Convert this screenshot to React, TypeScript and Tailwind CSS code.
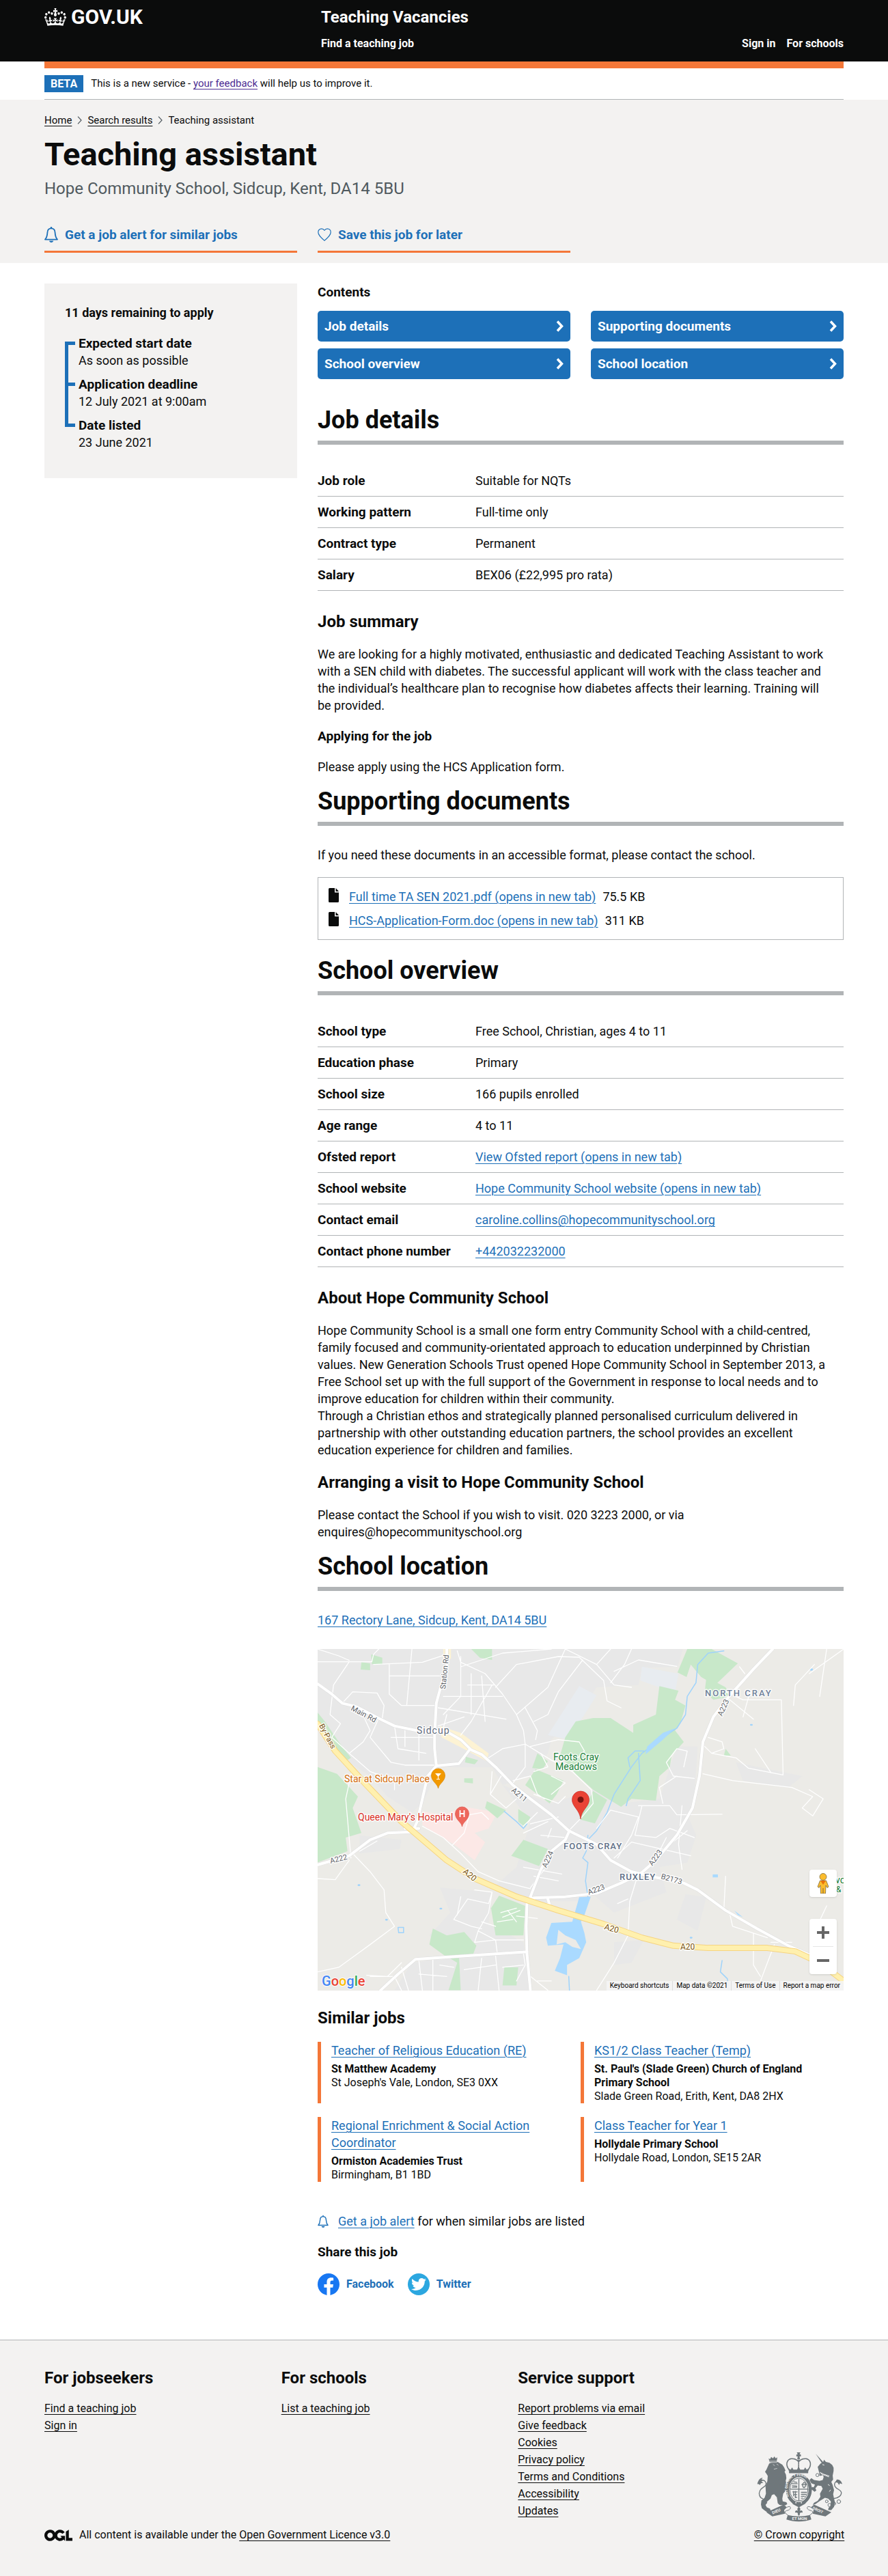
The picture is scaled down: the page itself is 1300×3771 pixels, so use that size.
import React from 'react';
import { FaTwitter } from 'react-icons/fa';

const LINK = 'text-[#1d70b8] underline decoration-1 underline-offset-[3px]';
const FOOT_LINK = 'underline decoration-1 underline-offset-[3px]';
const WRAP = 'mx-auto w-full max-w-[1230px] px-[30px]';

function Crown() {
  return (
    <svg aria-hidden="true" className="h-[26px] w-[32px]" viewBox="0 0 132 97" preserveAspectRatio="none" fill="currentColor">
      <path d="M25 30.2c3.5 1.5 7.7-.2 9.1-3.7 1.5-3.6-.2-7.8-3.9-9.2-3.6-1.4-7.6.3-9.1 3.9-1.4 3.5.3 7.5 3.9 9zM9 39.5c3.6 1.5 7.8-.2 9.2-3.7 1.5-3.6-.2-7.8-3.9-9.1-3.6-1.5-7.6.2-9.1 3.8-1.4 3.5.3 7.5 3.8 9zM4.4 57.2c3.5 1.5 7.7-.2 9.1-3.8 1.5-3.6-.2-7.7-3.9-9.1-3.5-1.5-7.6.3-9.1 3.8-1.4 3.5.3 7.6 3.9 9.1zm38.3-21.4c3.5 1.5 7.7-.2 9.1-3.8 1.5-3.6-.2-7.7-3.9-9.1-3.6-1.5-7.6.3-9.1 3.8-1.3 3.6.4 7.7 3.9 9.1zm64.4-5.6c-3.6 1.5-7.8-.2-9.1-3.7-1.5-3.6.2-7.8 3.8-9.2 3.6-1.4 7.7.3 9.2 3.9 1.3 3.5-.4 7.5-3.9 9zm15.9 9.3c-3.6 1.5-7.7-.2-9.1-3.7-1.5-3.6.2-7.8 3.7-9.1 3.6-1.5 7.7.2 9.2 3.8 1.5 3.5-.3 7.5-3.8 9zm4.7 17.7c-3.6 1.5-7.8-.2-9.2-3.8-1.5-3.6.2-7.7 3.9-9.1 3.6-1.5 7.7.3 9.2 3.8 1.3 3.5-.4 7.6-3.9 9.1zM89.3 35.8c-3.6 1.5-7.8-.2-9.2-3.8-1.4-3.6.2-7.7 3.9-9.1 3.6-1.5 7.7.3 9.2 3.8 1.4 3.6-.3 7.7-3.9 9.1zM69.7 17.7l8.9 4.7V9.3l-8.9 2.8c-.2-.3-.5-.6-.9-.9L72.4 0H59.6l3.5 11.2c-.3.3-.6.5-.9.9l-8.8-2.8v13.1l8.8-4.7c.3.3.6.7.9.9l-5 15.4v.1c-.2.8-.4 1.6-.4 2.4 0 4.1 3.1 7.5 7 8.1h.2c.3 0 .7.1 1 .1.4 0 .7 0 1-.1h.2c4-.6 7.1-4.1 7.1-8.1 0-.8-.1-1.7-.4-2.4V34l-5.1-15.4c.4-.2.7-.6 1-.9zM66 92.8c16.9 0 32.8 1.1 47.1 3.2 4-16.9 8.9-26.7 14-33.5l-9.6-3.4c1 4.9 1.1 7.2 0 10.2-1.5-1.4-3-4.3-4.2-8.7L108.6 76c2.8-2 5-3.2 7.5-3.3-4.4 9.4-10 11.9-13.6 11.2-4.3-.8-6.3-4.6-5.6-7.9 1-4.7 5.7-5.9 8-.5 4.3-8.7-3-11.4-7.6-8.8 7.1-7.2 7.9-13.5 2.1-21.1-8 6.1-8.1 12.3-4.5 20.8-4.7-5.4-12.1-2.5-9.5 6.2 3.4-5.2 7.9-2 7.2 3.1-.6 4.3-6.4 7.8-13.5 7.2-10.3-.9-10.9-8-11.2-13.8 2.5-.5 7.1 1.8 11 7.3L80.2 60c-4.1 4.4-8 5.3-12.3 5.4 1.4-4.4 8-11.6 8-11.6H55.5s6.4 7.2 7.9 11.6c-4.2-.1-8-1-12.3-5.4l1.4 16.4c3.9-5.5 8.5-7.7 10.9-7.3-.3 5.8-.9 12.8-11.1 13.8-7.2.6-12.9-2.9-13.5-7.2-.7-5 3.8-8.3 7.1-3.1 2.7-8.7-4.6-11.6-9.4-6.2 3.7-8.5 3.6-14.7-4.6-20.8-5.8 7.6-5 13.9 2.2 21.1-4.7-2.6-11.9.1-7.7 8.8 2.3-5.5 7.1-4.2 8.1.5.7 3.3-1.3 7.1-5.7 7.9-3.5.7-9-1.8-13.5-11.2 2.5.1 4.7 1.3 7.5 3.3l-4.7-15.4c-1.2 4.4-2.7 7.2-4.3 8.7-1.1-3-.9-5.3 0-10.2l-9.5 3.4c5 6.9 9.9 16.7 14 33.5 14.8-2.1 30.8-3.2 47.7-3.2z" />
    </svg>
  );
}

function Bell({ className }: { className: string }) {
  return (
    <svg aria-hidden="true" className={className} viewBox="0 0 20 23" fill="none">
      <path d="M10 2.4c-3.5 0-5.5 2.5-5.6 6.1C4.2 13 3.3 16 1 18.600h18c-2.300-2.600-3.200-5.600-3.400-10.100-.1-3.600-2.100-6.100-5.600-6.100z" stroke="#1d70b8" strokeWidth="1.800" strokeLinejoin="round" />
      <circle cx="10" cy="1.400" r="1.300" fill="#1d70b8" />
      <path d="M7 20.500h6.200c-.3 1.500-1.500 2.500-3.100 2.500s-2.800-1-3.100-2.500z" fill="#1d70b8" />
    </svg>
  );
}

function Heart() {
  return (
    <svg aria-hidden="true" className="h-[19px] w-[20px]" viewBox="0 0 20 19" fill="none">
      <path d="M10 18.200C5 13.800.8 10.200.8 5.900.8 3 3 .8 5.700.8 7.500.8 9.100 1.800 10 3.300 10.900 1.800 12.500.8 14.300.8 17 .8 19.200 3 19.200 5.900c0 4.300-4.200 7.900-9.200 12.300z" stroke="#1d70b8" strokeWidth="1.200" strokeLinejoin="round" />
    </svg>
  );
}

function FileIcon() {
  return (
    <svg aria-hidden="true" className="h-[21px] w-[15px] shrink-0" viewBox="0 0 15 21" fill="#0b0c0c">
      <path d="M1.500 0H9v6.500h6v13a1.500 1.500 0 0 1-1.500 1.500h-12A1.500 1.500 0 0 1 0 19.500v-18A1.500 1.500 0 0 1 1.500 0z" />
      <path d="M10.500 0L15 5h-4.500z" />
    </svg>
  );
}

function CrumbArrow() {
  return (
    <svg aria-hidden="true" className="h-[12px] w-[7px]" viewBox="0 0 7 12" fill="none">
      <path d="M1 .6L6 6 1 11.400" stroke="#505a5f" strokeWidth="1.200" />
    </svg>
  );
}

function H2({ children, className }: { children: React.ReactNode; className: string }) {
  return (
    <h2 className={`border-b-[6px] border-[#b1b4b6] pb-[10px] text-[36px] leading-[40px] font-bold ${className}`}>
      {children}
    </h2>
  );
}

function H3({ children, className }: { children: React.ReactNode; className: string }) {
  return <h3 className={`text-2xl leading-[30px] font-bold ${className}`}>{children}</h3>;
}

function Summary({ rows }: { rows: [string, string, boolean?][] }) {
  return (
    <dl className="mt-[30px] text-lg leading-[25px]">
      {rows.map(([k, v, link]) => (
        <div key={k} className="flex border-b border-[#b1b4b6] py-[10px]">
          <dt className="w-[30%] shrink-0 text-[19px] font-bold">{k}</dt>
          <dd>{link ? <a href="#" className={LINK}>{v}</a> : v}</dd>
        </div>
      ))}
    </dl>
  );
}

const URBAN = [
  'M29 42H1078L1062 120 960 125 950 200 830 210 780 330 700 440 690 500 640 600 560 640 530 560 380 560 330 720 300 760 230 690 180 600 120 540 29 370z',
  'M560 640L700 720 760 690 860 640 900 720 1010 700 1060 470 1120 470 1110 700 1090 770 1116 860 1090 980 1010 1000 1030 1110 880 1200 820 1120 800 1150 630 1150 540 1080 600 1000 640 800z',
  'M380 1090L530 1110 520 1250 620 1330 640 1541H250L300 1420 400 1400 350 1300 410 1200z',
  'M880 1330L965 1320 930 1420 880 1430z',
  'M1085 1120L1145 1130 1120 1280 1060 1230z',
  'M150 860L270 880 265 920 150 940z',
  'M1230 540L1420 600 1380 650 1250 620z',
];
const PARKS = [
  'M1090 42H1160L1235 105 1170 200 1130 165 1100 110 1088 165 1062 145z',
  'M1145 165L1200 210 1215 250 1165 265 1140 230z',
  'M1010 205L1065 225 1055 265 1085 290 1070 370 1055 400 1080 450 1045 510 1040 560 1010 600 1000 708 930 700 900 735 820 660 770 590 725 510 740 430 770 360 820 345 870 345 935 410 935 375 1000 330z',
  'M820 665L860 705 825 808 780 790z',
  'M660 500L690 535 675 570 645 565z',
  'M655 570L735 620 715 680 695 720 625 640z',
  'M29 560L85 590 145 690 130 740 155 850 110 870 115 930 29 980z',
  'M29 320L50 360 90 450 125 520 105 540 60 440 29 390z',
  'M515 710L570 750 545 785 510 740z',
  'M605 745L640 780 625 825 605 800z',
  'M620 880L690 920 665 995 585 950z',
  'M550 1125L625 1170 620 1300 540 1300 527 1180z',
  'M360 1270L400 1300 450 1285 485 1345 475 1385 395 1390 350 1340z',
  'M398 1390H435L440 1541H405L430 1420z',
  'M565 1440H605L600 1520H560z',
  'M470 42H530V90L495 80z',
  'M155 100L180 105V135L153 132z',
  'M183 65L215 80V110L185 108z',
  'M450 610H475V632L450 628z',
  'M455 515L490 530 480 548 452 540z',
  'M1200 480L1215 510 1195 510z',
];
const MINOR = [
  'M29 98H185L190 65 205 42M29 42L90 72 120 92M190 110L330 100 390 70M120 98L75 200 65 330 95 370 70 430 120 500 180 580 250 620 250 660',
  'M235 110V240L270 290H370M235 160H380M285 290L300 42M205 345L180 430 240 540 280 552H365M165 350L180 400 160 450 120 500M100 280L130 230 200 235 220 290 215 345',
  'M430 50L440 100 510 150 560 240 600 330 620 400 625 460 560 480 520 520M440 75L440 250 390 330M440 120L560 60 700 42M540 210L600 110 720 75 780 78M600 330L690 210 740 42M625 300L660 400 655 440M740 42L830 110 880 200 930 210M830 110L870 42M880 140L950 90 1060 118M930 42L910 110 870 190M780 78L850 180 860 270 900 300M790 90L720 230 690 330 650 360',
  'M375 300L570 350M440 250H560M470 150V330M500 160L510 360M375 380L450 340M530 200L470 360 440 420M460 200H535M390 250H470M400 330L390 390M250 380L260 480 340 500M280 400V470M300 430H360M240 430H360M320 420V530',
  'M625 460L700 530 760 580 815 660 820 720 785 785 750 840M625 460L625 560 585 640M640 470L720 440 780 450 795 490 770 530 740 520M530 580L525 680 570 740 600 700M560 590L525 680M590 620L640 600 660 680 680 700M670 500L690 560 650 580M700 600L740 630 700 680M650 680L720 720 740 690',
  'M690 800L620 850M720 780L640 810M700 830L690 870M670 860L740 870M620 820L660 760M830 830L870 750 950 780 930 860 890 960M950 730H1040L1060 770 1190 768M960 730L940 860 1000 870 1040 830M880 960L930 890 1100 950M1040 830L1110 870M1030 870L1010 930M1040 900L1090 840M1060 600L1010 650 1020 720M1060 480L1030 540 1050 600 1110 610M1060 480L1090 490 1080 560',
  'M330 820L390 870 440 940 490 1020 550 1060 640 1095M415 905L450 850 465 770 500 760 520 790M130 940L180 1020 220 1100 225 1200 250 1260 180 1340 90 1440 29 1460M125 960L110 700 130 560M29 1050L80 1055 120 970M200 885L150 930M620 1000L730 1030M680 1010L640 1090M650 1040L720 1060',
  'M480 1100L530 1110 520 1160 460 1140 420 1230 470 1260 500 1270M530 1110L520 1200 490 1280 540 1320 545 1380M490 1280L480 1330 540 1320 620 1320M500 1240L540 1260M440 1130L430 1210M545 1240L590 1230M600 1215L660 1225M575 1190L600 1240M560 1220L610 1190M555 1200L600 1180',
  'M270 1420L230 1480 170 1475M320 1410L330 1541M360 1400V1541M320 1470L400 1480M500 1400L490 1541M540 1390L550 1541M450 1450L540 1430M380 1430L420 1440M270 1440L290 1541M620 1380L625 1430 600 1500M640 1480L690 1541M660 1500H700M560 1440L620 1430M180 1480H250L270 1541',
  'M1140 470L1160 500 1230 520 1265 565 1330 585 1365 595 1360 265H1250L1200 230M1135 590L1220 620 1390 650 1450 690 1420 740 1450 775 1480 700 1440 660M1150 430L1190 450 1195 480 1160 500M1200 250L1280 350M1285 480L1330 585M1270 230L1250 340M1455 110L1400 200 1395 290M1490 42L1470 250M1440 150L1539 42M1240 120L1255 150',
  'M945 1050L925 1150 920 1300 880 1420 830 1541M1075 730L1065 900 1075 1010M1200 1040L1195 1190M1210 1190L1220 1260 1320 1310M1340 1340L1320 1420 1290 1541M1280 1290V1430L1300 1480M1490 1170L1450 1300 1470 1430M920 1140L890 1160M1330 1330H1390',
];
const MAJOR = [
  'M29 195L70 240 100 280 140 295 210 350 250 380 330 405 400 405 440 440 470 485 500 505 540 560 590 640 640 700 700 770 750 840 830 900 870 970 930 1020',
  'M400 42L400 110 370 280 365 420 365 480 370 555 435 545 465 485',
  'M370 555L345 600 330 700 315 800 300 850',
  'M29 990L120 950 180 880 230 850 300 845',
  'M752 840L740 880 700 930 670 1010 640 1130',
  'M1335 42L1280 130 1210 250 1165 340 1135 450 1125 600 1105 740 1060 860 1000 970 955 1030 900 1070 830 1115 740 1130 650 1135',
  'M930 1020L1000 1045 1080 1070 1120 1100 1200 1190 1290 1270 1380 1345 1440 1385',
  'M630 1160L628 1260 630 1380 640 1541',
  'M210 1541L260 1470 310 1405 400 1395 630 1372',
  'M640 1130L660 1160 695 1165 690 1140M280 830L320 830',
];
const A20 = 'M29 370L80 490 170 640 270 800 400 970 480 1050 600 1130 720 1190 850 1250 960 1310 1050 1345 1150 1355 1320 1355 1400 1370 1470 1420 1539 1500';
const RIVERS = [
  'M1195 50L1150 60 1120 110 1115 190 1090 250 1085 330 1060 390 1040 410 960 500 930 560 880 680 860 760 830 840 805 880',
  'M950 500L955 620 920 700 915 730M925 560L920 520 940 490 965 490M565 755L600 800 620 830 630 810M805 860L800 930 790 960 805 980 798 1060 805 1130',
  'M1190 1410L1185 1460 1205 1490 1210 1541M750 1480L752 1541',
];
const LAKES = [
  'M1055 390L1020 440 970 505 975 470 1020 410z',
  'M780 1132L813 1130 795 1210 785 1240 795 1290 800 1330 780 1400 745 1430 745 1475 710 1455 725 1400 735 1340 690 1345 685 1310 700 1245 760 1240z',
  'M1163 1032H1178V1045H1163z',
  'M1225 1190L1250 1220 1235 1210z',
];

const LABELS: [string, number, number, number, number, string, number, number?][] = [
  ['NORTH CRAY', 567, 69, 13, 0, '#71829b', 500, 2],
  ['Sidcup', 145, 124, 14, 0, '#5f6b7c', 400, 1],
  ['FOOTS CRAY', 360, 293, 13, 0, '#5f6f86', 500, 1],
  ['RUXLEY', 442, 338, 13, 0, '#5f6f86', 500, 1],
  ['Main Rd', 48, 89, 11, 28, '#5f6368', 400],
  ['Station Rd', 187, 59, 11, -84, '#5f6368', 400],
  ['By-Pass', 2, 112, 11, 62, '#7a5411', 400],
  ['A211', 283, 208, 11, 40, '#5f6368', 400],
  ['A222', 19, 314, 11, -14, '#5f6368', 400],
  ['A224', 335, 321, 11, -66, '#5f6368', 400],
  ['A223', 592, 99, 11, -66, '#5f6368', 400],
  ['A223', 490, 318, 11, -54, '#5f6368', 400],
  ['A223', 397, 360, 11, -20, '#5f6368', 400],
  ['B2173', 502, 336, 11, 16, '#5f6368', 400],
  ['A20', 212, 327, 12, 40, '#7a5411', 400],
  ['A20', 419, 410, 12, 16, '#7a5411', 400],
  ['A20', 531, 440, 12, 0, '#7a5411', 400],
  ['Foots Cray', 345, 163, 14, 0, '#188038', 400],
  ['Meadows', 348, 177, 14, 0, '#188038', 400],
  ['Star at Sidcup Place', 39, 195, 14, 0, '#d56e0c', 400],
  ["Queen Mary's Hospital", 59, 251, 14, 0, '#d93025', 400],
  ['vo', 758, 343, 14, 0, '#188038', 400],
  ['&', 759, 356, 12, 0, '#188038', 400],
];

function MapArt() {
  return (
    <svg role="img" aria-label="Map of the area around the school" className="h-full w-full" viewBox="0 0 770 500" preserveAspectRatio="xMidYMid slice">
      <rect width="770" height="500" fill="#ecebe7" />
      <g transform="translate(-15 -14) scale(.5102 .3333)" fill="none" strokeLinejoin="round" strokeLinecap="round">
        {URBAN.map((d) => <path key={d} d={d} fill="#e8e8e8" />)}
        <path d="M780 205L830 245 750 440 690 420zM960 120L1065 150 1055 235 955 180z" fill="#e8ecf0" />
        <path d="M330 755L390 770 450 735 545 760 520 830 480 850 510 890 480 970 420 900 330 815z" fill="#fce8e6" />
        <path d="M380 380L440 410 520 500 515 535 460 490 385 430zM390 42H412V85H390z" fill="#fdf3d4" />
        {PARKS.map((d) => <path key={d} d={d} fill="#c8e8c9" />)}
        {RIVERS.map((d) => <path key={d} d={d} stroke="#9fd3fb" strokeWidth="1.500" vectorEffect="non-scaling-stroke" />)}
        {LAKES.map((d) => <path key={d} d={d} fill="#aadaff" />)}
        <path d="M720 1275L715 1340 740 1330 760 1350 785 1360 770 1320 740 1300z" fill="#ecebe7" />
        <path d="M260 1265H276V1288H262z" stroke="#9fd3fb" strokeWidth="1.500" vectorEffect="non-scaling-stroke" />
        <g fill="#9fd3fb"><circle cx="1446" cy="132" r="5" /><circle cx="1274" cy="375" r="4" /><circle cx="148" cy="1079" r="4" /><circle cx="383" cy="1182" r="4" /><circle cx="227" cy="1231" r="4" /><circle cx="1101" cy="1310" r="4" /></g>
        {MINOR.map((d) => <path key={d} d={d} stroke="#fff" strokeWidth="1.300" vectorEffect="non-scaling-stroke" />)}
        {MAJOR.map((d) => <path key={d} d={d} stroke="#dedede" strokeWidth="5" vectorEffect="non-scaling-stroke" />)}
        {MAJOR.map((d) => <path key={d} d={d} stroke="#fff" strokeWidth="4" vectorEffect="non-scaling-stroke" />)}
        <path d={A20} stroke="#f6d481" strokeWidth="9" vectorEffect="non-scaling-stroke" />
        <path d={A20} stroke="#fff0ae" strokeWidth="7" vectorEffect="non-scaling-stroke" />
      </g>
      <g fontFamily="Roboto, sans-serif" stroke="#fff" strokeWidth="3" strokeOpacity=".85" strokeLinejoin="round" paintOrder="stroke">
        {LABELS.map(([t, x, y, s, r, c, w, ls]) => (
          <text key={t + x} x={x} y={y} fontSize={s} fill={c} fontWeight={w} letterSpacing={ls} transform={`rotate(${r} ${x} ${y})`}>{t}</text>
        ))}
        <text x="6" y="493" fontSize="20" fontWeight="500" strokeWidth="2">
          <tspan fill="#4285f4">G</tspan><tspan fill="#ea4335">o</tspan><tspan fill="#fbbc05">o</tspan><tspan fill="#4285f4">g</tspan><tspan fill="#34a853">l</tspan><tspan fill="#ea4335">e</tspan>
        </text>
      </g>
      <path d="M176.500 204c-1-7-10-10-10-19a10 10 0 0 1 20 0c0 9-9 12-10 19z" fill="#f29900" stroke="#d98200" strokeWidth=".7" />
      <path d="M172 182h9l-4 4.500v3.500h2v1h-5v-1h2v-3.500z" fill="#fff" />
      <path d="M211.500 260c-1-7-10-10-10-19a10 10 0 0 1 20 0c0 9-9 12-10 19z" fill="#ee675c" stroke="#d9534a" strokeWidth=".7" />
      <path d="M208.500 236v10M214.500 236v10M208.500 241h6" stroke="#fff" strokeWidth="1.800" />
      <path d="M385 249c-1.500-14-12.500-18-12.500-28.500a12.500 12.500 0 0 1 25 0C397.500 231 386.500 235 385 249z" fill="#ea4335" stroke="#c5221f" strokeWidth=".6" />
      <circle cx="385" cy="220.500" r="4.500" fill="#7a1510" />
    </svg>
  );
}

function SchoolMap() {
  return (
    <div className="relative mt-[30px] h-[500px] overflow-hidden">
      <MapArt />
      <button type="button" aria-label="Street view" className="absolute right-[10px] bottom-[137px] flex h-10 w-10 items-center justify-center rounded-sm bg-white shadow">
        <svg aria-hidden="true" className="h-[30px] w-[18px]" viewBox="0 0 18 30">
          <path d="M4.500 11h9l3.500 9-2 1.500-2-3.500-.5 12H5.500L5 18l-2 3.500L1 20z" fill="#fbbc2d" stroke="#7d6b3f" strokeWidth=".8" />
          <circle cx="9" cy="5.500" r="5" fill="#fbbc2d" stroke="#7d6b3f" strokeWidth=".8" />
          <path d="M5 11l4 6 4-6z" fill="#e8710a" />
          <path d="M9 22v8" stroke="#7d6b3f" strokeWidth="1" />
        </svg>
      </button>
      <div className="absolute right-[10px] bottom-[24px] flex w-10 flex-col items-center rounded-sm bg-white shadow">
        <button type="button" aria-label="Zoom in" className="flex h-10 w-10 items-center justify-center">
          <svg aria-hidden="true" className="size-[18px]" viewBox="0 0 18 18"><path d="M9 0v18M0 9h18" stroke="#666" strokeWidth="4" /></svg>
        </button>
        <span className="h-px w-[30px] bg-[#e6e6e6]" />
        <button type="button" aria-label="Zoom out" className="flex h-10 w-10 items-center justify-center">
          <svg aria-hidden="true" className="size-[18px]" viewBox="0 0 18 18"><path d="M0 9h18" stroke="#666" strokeWidth="4" /></svg>
        </button>
      </div>
      <div className="absolute right-0 bottom-0 flex h-[14px] divide-x divide-[#dcdcdc] bg-[#f5f5f5]/90 text-[10px] leading-[14px] text-black">
        <button type="button" className="px-[5px]">Keyboard shortcuts</button>
        <span className="px-[5px]">Map data ©2021</span>
        <a href="#" className="px-[5px]">Terms of Use</a>
        <a href="#" className="px-[5px]">Report a map error</a>
      </div>
    </div>
  );
}

function Crest() {
  const g = '#6f777b';
  const bg = '#f3f2f1';
  return (
    <svg aria-hidden="true" className="h-[103px] w-[125px]" viewBox="50 55 376 310" fill="none" strokeLinecap="round" strokeLinejoin="round">
      {/* lion */}
      <path fill={g} d="M104 108c10-9 34-12 44-4l14 8 8 12 6 14-4 6 6 12 2 16-3 12 5 18-5 8-3 20-8 10-4 22 2 12 16 4 4 8-10 6-24-2-8-8-4-26-12-14-10 4-6 16-20 18-4 14 10 12 14 6 2 10h-16l-14-10-10-8-4-16 2-18 14-12 6-18-2-34 8-20 2-24-6-10-6-8 6-10z" />
      <path fill={g} d="M102 84l6 4 5-10 8 6 6-8 6 8 7-4-3 22h-31z" />
      <path stroke={bg} strokeWidth="2" d="M106 97h32M108 103l30-1M122 112l6 4M138 110l6 4M126 132l12-3" />
      <path stroke={g} strokeWidth="4" d="M76 262c-14-4-20-20-12-36 6-12 18-14 24-22 6-10 0-22-12-24-10-2-20 8-22 16" />
      <path fill={g} d="M54 196c0-12 8-26 22-26l-6 8 12 2-12 6 8 6-10 2-4 8z" />
      <path fill={g} d="M76 282l14-10 6 8-8 10 6 10 14 6 2 8H90l-14-10zM150 200l22 12 14 4-8 12-14-6z" />
      {/* unicorn */}
      <path fill={g} d="M309 64l34 38-6 4zM318 122l12-14 12-8 4-10 8 10 16 4 12 10 6 12 0 14-4 20 2 18-8 10 6 14 6 22-4 18 4 20 4 16-4 20-12 14h-14l2-10 8-6 2-22-12-12-14-4-22 14-20 14-12 4 6-10 16-8 12-18-2-14 12-22-6-12-16-2-10 12 4 10-8 6-14-12 2-10 8 2 6-12-16-6-8-14 8-8 12 8 24 4 14-4 4-12-2-10-14 4z" />
      <path stroke={bg} strokeWidth="3" d="M328 146l16 8 24 8M332 152l34 14M340 112l6 2M374 224l-4 6M364 200l6 4" />
      <path stroke={g} strokeWidth="4" d="M388 262c20-2 36-14 34-28-2-12-20-12-28-26-6-12 2-24 14-24" />
      <path fill={g} d="M402 178c12-2 22 8 24 20l-10-4-4 8-6-10-10-2z" />
      <g stroke={g} strokeWidth="3"><circle cx="317" cy="158" r="7" /><circle cx="358" cy="274" r="6" /><circle cx="370" cy="290" r="7" /><circle cx="390" cy="284" r="7" /><circle cx="411" cy="275" r="8" /></g>
      {/* crown */}
      <path stroke={g} strokeWidth="5" strokeDasharray="4 3" d="M190 132c-18-26-2-48 16-46 14 0 24 8 28 14M278 132c18-26 2-48-16-46-14 0-24 8-28 14M234 92v36" />
      <path fill={g} d="M226 58h16l-4 8 6 2v8l-6-1 2 14h-12l2-14-6 1v-8l6-2zM187 128l12 6 6-10 6 10 16 0 7-14 7 14 16 0 6-10 6 10 12-6-7 22h-80z" />
      <path stroke={g} strokeWidth="5" d="M194 147c24-6 56-6 80 0" />
      {/* garter and shield */}
      <ellipse cx="235" cy="222" rx="55" ry="68" fill={bg} stroke={g} strokeWidth="3" />
      <ellipse cx="235" cy="222" rx="50" ry="62" stroke={g} strokeWidth="14" />
      <ellipse cx="235" cy="222" rx="40" ry="50" fill={bg} stroke={g} strokeWidth="3" />
      <path id="garter" d="M191 254c-18-62 6-92 44-92s62 30 44 92" />
      <text fontFamily="Roboto, sans-serif" fontSize="15" fontWeight="700" fill={bg}><textPath href="#garter">SOIT QUI MAL Y PENSE</textPath></text>
      <path stroke={g} strokeWidth="4" d="M235 176v94M197 220h76" />
      <path stroke={g} strokeWidth="4" d="M204 196h24M206 205l20 2M206 212h20M212 188l14 2M258 190c-10 8-8 20 0 24 8-6 10-16 2-24M248 200h20M208 232l20 0M212 244l14 0M218 254l8 2M212 230v20M220 230v28M246 234h22M246 243h20M246 252h14M246 260h6" />
      <path fill={g} d="M204 264l12 12 19 6 19-6 14-14-4 22-29 16-27-14z" />
      <circle cx="222" cy="280" r="3" fill={bg} /><circle cx="246" cy="280" r="3" fill={bg} />
      {/* scroll */}
      <path fill={g} d="M92 322l76-34 14 12-12 12 4 16-56 12zM378 322l-76-34-14 12 12 12-4 16 56 12zM186 334c32 8 66 8 98 0l6 20c-34 12-76 12-110 0z" />
      <path stroke={g} strokeWidth="3" d="M182 300c14-8 20 0 14 8-8 8-24 6-22 14 2 8 10 8 12 12M288 300c-14-8-20 0-14 8 8 8 24 6 22 14-2 8-10 8-12 12" />
      <path fill={g} d="M235 298c10 8 6 14 4 18 8-6 14 0 12 8-4-2-8 0-12 2 2 4 0 8-4 12-4-4-6-8-4-12-4-2-8-4-12-2-2-8 4-14 12-8-2-4-6-10 4-18z" />
      <g fontFamily="Roboto, sans-serif" fontSize="18" fontWeight="700" fill={bg}>
        <text x="120" y="331" transform="rotate(-22 120 331)">DIEU</text>
        <text x="205" y="356">ET MON</text>
        <text x="294" y="308" fontSize="17" transform="rotate(24 294 308)">DROIT</text>
      </g>
    </svg>
  );
}

const JOBS = [
  ['Teacher of Religious Education (RE)', 'St Matthew Academy', "St Joseph's Vale, London, SE3 0XX"],
  ['KS1/2 Class Teacher (Temp)', "St. Paul's (Slade Green) Church of England Primary School", 'Slade Green Road, Erith, Kent, DA8 2HX'],
  ['Regional Enrichment & Social Action Coordinator', 'Ormiston Academies Trust', 'Birmingham, B1 1BD'],
  ['Class Teacher for Year 1', 'Hollydale Primary School', 'Hollydale Road, London, SE15 2AR'],
];

const FOOTER: [string, string[]][] = [
  ['For jobseekers', ['Find a teaching job', 'Sign in']],
  ['For schools', ['List a teaching job']],
  ['Service support', ['Report problems via email', 'Give feedback', 'Cookies', 'Privacy policy', 'Terms and Conditions', 'Accessibility', 'Updates']],
];

const TIMELINE = [
  ['Expected start date', 'As soon as possible'],
  ['Application deadline', '12 July 2021 at 9:00am'],
  ['Date listed', '23 June 2021'],
];

export default function App() {
  return (
    <div className="bg-white font-[Roboto,sans-serif] text-lg leading-[25px] text-[#0b0c0c]">
      <header className="bg-[#0b0c0c] text-white">
        <div className={`${WRAP} grid pt-[10px] pb-[16px] md:grid-cols-[405px_1fr]`}>
          <a href="#" className="flex h-[30px] items-center gap-[7px] text-[30px] leading-[30px] font-bold">
            <Crown />
            GOV.UK
          </a>
          <div>
            <a href="#" className="block text-2xl leading-[30px] font-bold">Teaching Vacancies</a>
            <nav className="mt-[14px] flex gap-4 text-base leading-5 font-bold">
              <a href="#" className="mr-auto">Find a teaching job</a>
              <a href="#">Sign in</a>
              <a href="#">For schools</a>
            </nav>
          </div>
        </div>
      </header>

      <div className={WRAP}>
        <div className="h-[10px] bg-[#f47738]" />
        <div className="flex items-center border-b border-[#b1b4b6] py-[10px] text-base leading-[25px]">
          <strong className="mr-[11px] bg-[#1d70b8] px-[9px] font-bold text-white">BETA</strong>
          <span className="text-[15px]">
            This is a new service - <a href="#" className="text-[#4c2c92] underline decoration-1 underline-offset-[3px]">your feedback</a> will help us to improve it.
          </span>
        </div>
      </div>

      <div className="bg-[#f3f2f1] pt-5 pb-[15px]">
        <div className={WRAP}>
          <nav aria-label="Breadcrumb">
            <ol className="flex items-center gap-2 text-[15px] leading-5">
              <li><a href="#" className={FOOT_LINK}>Home</a></li>
              <li aria-hidden="true"><CrumbArrow /></li>
              <li><a href="#" className={FOOT_LINK}>Search results</a></li>
              <li aria-hidden="true"><CrumbArrow /></li>
              <li>Teaching assistant</li>
            </ol>
          </nav>
          <h1 className="mt-[15px] text-[47px] leading-[50px] font-bold">Teaching assistant</h1>
          <p className="mt-[10px] text-2xl leading-[30px] text-[#505a5f]">Hope Community School, Sidcup, Kent, DA14 5BU</p>
          <div className="mt-10 grid grid-cols-1 gap-x-[30px] text-[19px] font-bold text-[#1d70b8] md:grid-cols-3">
            <a href="#" className="flex items-center gap-[10px] border-b-[3px] border-[#f47738] pb-[11px]"><Bell className="h-[23px] w-[20px]" />Get a job alert for similar jobs</a>
            <a href="#" className="flex items-center gap-[10px] border-b-[3px] border-[#f47738] pb-[11px]"><Heart />Save this job for later</a>
          </div>
        </div>
      </div>

      <div className={`${WRAP} grid grid-cols-1 items-start gap-[30px] pt-[30px] pb-[65px] md:grid-cols-3`}>
        <aside className="bg-[#f3f2f1] p-[30px]">
          <h2 className="text-lg leading-[25px] font-bold">11 days remaining to apply</h2>
          <ul className="mt-5">
            {TIMELINE.map(([k, v], i) => (
              <li key={k} className="relative pb-[10px] pl-5">
                <span className="absolute top-[10px] left-0 h-[5px] w-[15px] bg-[#1d70b8]" />
                {i < 2 && <span className="absolute top-[10px] left-0 h-full w-[5px] bg-[#1d70b8]" />}
                <h3 className="text-[19px] font-bold">{k}</h3>
                <p>{v}</p>
              </li>
            ))}
          </ul>
        </aside>

        <main className="md:col-span-2">
          <h2 className="text-[19px] leading-[25px] font-bold">Contents</h2>
          <nav aria-label="Contents" className="mt-[15px] grid grid-cols-2 gap-x-[30px] gap-y-[10px]">
            {['Job details', 'Supporting documents', 'School overview', 'School location'].map((t) => (
              <a key={t} href="#" className="flex items-center justify-between rounded-[5px] bg-[#1d70b8] p-[10px] text-[19px] font-bold text-white">
                {t}
                <svg aria-hidden="true" className="h-[17px] w-[11px]" viewBox="0 0 11 17" fill="none"><path d="M2 1.500L8.500 8.500 2 15.500" stroke="#fff" strokeWidth="3.500" /></svg>
              </a>
            ))}
          </nav>

          <H2 className="mt-10">Job details</H2>
          <Summary rows={[['Job role', 'Suitable for NQTs'], ['Working pattern', 'Full-time only'], ['Contract type', 'Permanent'], ['Salary', 'BEX06 (£22,995 pro rata)']]} />
          <H3 className="mt-[30px]">Job summary</H3>
          <p className="mt-5 pr-4">
            We are looking for a highly motivated, enthusiastic and dedicated Teaching Assistant to work with a SEN child with diabetes. The successful applicant will work with the class teacher and the individual’s healthcare plan to recognise how diabetes affects their learning. Training will be provided.
          </p>
          <h4 className="mt-5 text-[19px] font-bold">Applying for the job</h4>
          <p className="mt-5">Please apply using the HCS Application form.</p>

          <H2 className="mt-[18px]">Supporting documents</H2>
          <p className="mt-[30px]">If you need these documents in an accessible format, please contact the school.</p>
          <ul className="mt-5 space-y-[10px] border border-[#b1b4b6] p-[15px]">
            {[['Full time TA SEN 2021.pdf (opens in new tab)', '75.5 KB'], ['HCS-Application-Form.doc (opens in new tab)', '311 KB']].map(([t, s]) => (
              <li key={t} className="flex h-[25px]">
                <FileIcon />
                <a href="#" className={`ml-[15px] ${LINK}`}>{t}</a>
                <span className="ml-[10px]">{s}</span>
              </li>
            ))}
          </ul>

          <H2 className="mt-[25px]">School overview</H2>
          <Summary
            rows={[
              ['School type', 'Free School, Christian, ages 4 to 11'],
              ['Education phase', 'Primary'],
              ['School size', '166 pupils enrolled'],
              ['Age range', '4 to 11'],
              ['Ofsted report', 'View Ofsted report (opens in new tab)', true],
              ['School website', 'Hope Community School website (opens in new tab)', true],
              ['Contact email', 'caroline.collins@hopecommunityschool.org', true],
              ['Contact phone number', '+442032232000', true],
            ]}
          />
          <H3 className="mt-[30px]">About Hope Community School</H3>
          <p className="mt-5">
            Hope Community School is a small one form entry Community School with a child-centred, family focused and community-orientated approach to education underpinned by Christian values. New Generation Schools Trust opened Hope Community School in September 2013, a Free School set up with the full support of the Government in response to local needs and to improve education for children within their community.
            <br />
            Through a Christian ethos and strategically planned personalised curriculum delivered in partnership with other outstanding education partners, the school provides an excellent education experience for children and families.
          </p>
          <H3 className="mt-5">Arranging a visit to Hope Community School</H3>
          <p className="mt-5">
            Please contact the School if you wish to visit. 020 3223 2000, or via
            <br />
            enquires@hopecommunityschool.org
          </p>

          <H2 className="mt-[18px]">School location</H2>
          <p className="mt-[30px]"><a href="#" className={LINK}>167 Rectory Lane, Sidcup, Kent, DA14 5BU</a></p>
          <SchoolMap />

          <H3 className="mt-[25px]">Similar jobs</H3>
          <ul className="mt-5 grid grid-cols-2 gap-y-5">
            {JOBS.map(([t, s, a]) => (
              <li key={t} className="border-l-[5px] border-[#f47738] pr-[30px] pl-[15px] text-base leading-5">
                <a href="#" className={`block text-lg leading-[25px] ${LINK}`}>{t}</a>
                <p className="mt-[5px] font-bold">{s}</p>
                <p>{a}</p>
              </li>
            ))}
          </ul>
          <p className="mt-[45px] flex items-center">
            <Bell className="mr-[14px] h-[18px] w-[16px]" />
            <span><a href="#" className={LINK}>Get a job alert</a> for when similar jobs are listed</span>
          </p>
          <h2 className="mt-5 text-[19px] leading-[25px] font-bold">Share this job</h2>
          <div className="mt-[19px] flex gap-5 text-base font-bold text-[#1d70b8]">
            <a href="#" className="flex items-center gap-[10px]">
              <svg aria-hidden="true" className="size-8" viewBox="0 0 24 24" fill="#1877f2"><path d="M24 12.073c0-6.627-5.373-12-12-12s-12 5.373-12 12c0 5.990 4.388 10.954 10.125 11.854v-8.385H7.078v-3.470h3.047V9.430c0-3.007 1.792-4.669 4.533-4.669 1.312 0 2.686.235 2.686.235v2.953H15.830c-1.491 0-1.956.925-1.956 1.874v2.250h3.328l-.532 3.470h-2.796v8.385C19.612 23.027 24 18.062 24 12.073z" /></svg>
              Facebook
            </a>
            <a href="#" className="flex items-center gap-[10px]">
              <span className="flex size-8 items-center justify-center rounded-full bg-[#2ca7e0] text-white"><FaTwitter size={22} /></span>
              Twitter
            </a>
          </div>
        </main>
      </div>

      <footer className="border-t border-[#b1b4b6] bg-[#f3f2f1] pt-10 pb-[50px] text-base leading-5">
        <div className={`${WRAP} flex items-end`}>
          <div className="flex-1">
            <div className="grid grid-cols-3">
              {FOOTER.map(([h, links]) => (
                <div key={h}>
                  <h2 className="text-2xl leading-[30px] font-bold">{h}</h2>
                  <ul className="mt-5">
                    {links.map((l) => <li key={l} className="mb-[5px]"><a href="#" className={FOOT_LINK}>{l}</a></li>)}
                  </ul>
                </div>
              ))}
            </div>
            <p className="mt-[10px] flex items-center gap-[10px]">
              <svg aria-hidden="true" className="h-[17px] w-[41px]" viewBox="0 0 483.200 195.700"><path fill="#0b0c0c" d="M421.500 142.800V.1l-50.700 32.300v161.100h112.400v-50.700zm-122.300-9.600A47.120 47.120 0 0 1 221 97.800c0-26 21.100-47.100 47.100-47.100 16.700 0 31.400 8.700 39.700 21.800l42.700-27.200A97.630 97.630 0 0 0 268.100 0c-36.500 0-68.300 20.100-85.100 49.700A98 98 0 0 0 97.800 0C43.900 0 0 43.900 0 97.800s43.900 97.800 97.800 97.800c36.500 0 68.300-20.100 85.100-49.700a97.760 97.760 0 0 0 149.600 25.400l19.400 22.200h3v-87.800h-80l24.300 27.500zM97.800 145c-26 0-47.100-21.100-47.100-47.100s21.100-47.100 47.100-47.100 47.100 21.100 47.100 47.100S123.800 145 97.800 145" /></svg>
              <span>All content is available under the <a href="#" className={FOOT_LINK}>Open Government Licence v3.0</a></span>
            </p>
          </div>
          <a href="#" className={`flex w-[130px] flex-col items-center gap-[9px] whitespace-nowrap ${FOOT_LINK}`}>
            <Crest />
            © Crown copyright
          </a>
        </div>
      </footer>
    </div>
  );
}
